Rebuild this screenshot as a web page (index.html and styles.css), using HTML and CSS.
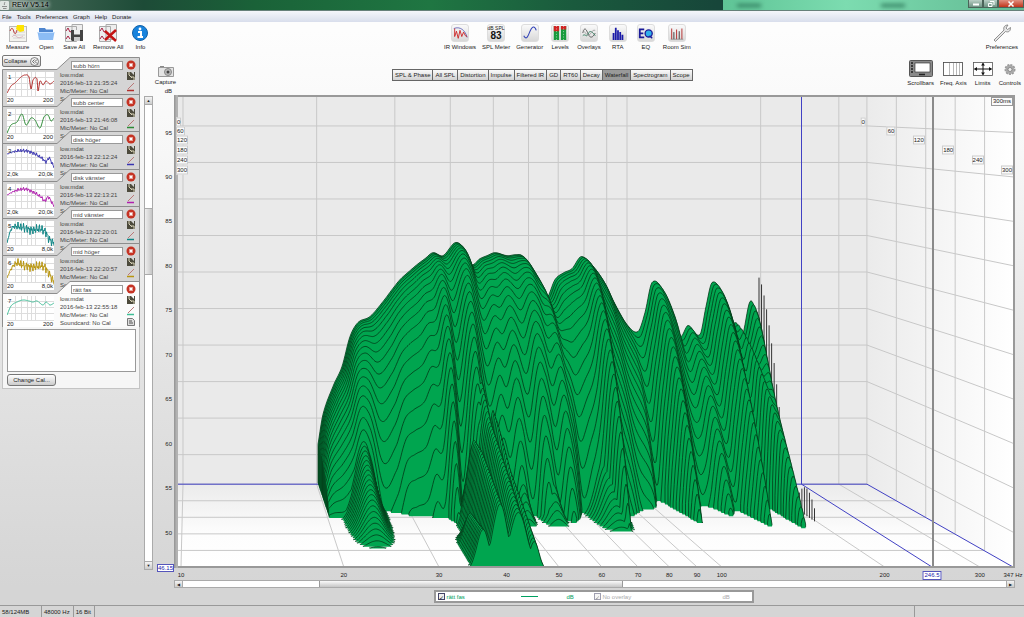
FILE: index.html
```html
<!DOCTYPE html>
<html lang="en">
  <head>
    <meta charset="UTF-8" />
    <meta name="viewport" content="width=device-width, initial-scale=1.0" />
    <title>REW V5.14</title>
    <link rel="stylesheet" href="styles.css">
  </head>
  <body>
    <header class="titlebar">
      <svg class="app-icon" width="9" height="9" viewBox="0 0 9 9"><rect width="9" height="9" rx="1" fill="#dfe5e2"/><path d="M4.500 1c1 1-1 1.500 0 3M2 5.500h5M3 7.500h3.500" stroke="#777" stroke-width=".8" fill="none"/></svg>
      <span>REW V5.14</span>
      <div class="glass"><i></i><i></i></div>
      <div class="window-buttons">
        <button aria-label="Minimize"><svg width="8" height="8"><path d="M1 4.500h6" stroke="#fff" stroke-width="2"/></svg></button>
        <button aria-label="Restore"><svg width="8" height="8"><path d="M3 1.500h4v3.500M1.500 3.500h3.500v3h-3.500z" stroke="#fff" fill="none"/></svg></button>
        <button class="close" aria-label="Close"><svg width="8" height="8"><path d="M1.500 1.500l5 5M6.500 1.500l-5 5" stroke="#fff" stroke-width="1.500"/></svg></button>
      </div>
    </header>

    <nav class="menubar">
      <button>File</button><button>Tools</button><button>Preferences</button><button>Graph</button><button>Help</button><button>Donate</button>
    </nav>

    <div class="toolbar">
      <div class="tools tools-left">
        <button class="tool">
          <svg width="18" height="18" viewBox="0 0 18 18"><rect x=".5" y="2.500" width="17" height="15" fill="#f3f3ee" stroke="#bbb"/><path d="M4 8h12M4 11h12M4 14h12" stroke="#d2d2d2"/><path d="M1 7c2-5 3-2 4 1s2 2 3-2" stroke="#b33" fill="none"/><path d="M3 13c2-3 4-1 5 0s4 1 6-1" stroke="#c9a" fill="none" stroke-width=".6"/><path d="M8 1h7v6l-4 1-4-3z" fill="#ffe400"/></svg>
          Measure
        </button>
        <button class="tool">
          <svg width="18" height="18" viewBox="0 0 18 18"><path d="M2 4h6l1 1.500h7V15H2z" fill="#4f86cf"/><path d="M.5 8h17L16 16H2z" fill="#8cbcf4"/><path d="M1 8.500h16" stroke="#bedcff"/></svg>
          Open
        </button>
        <button class="tool">
          <svg width="18" height="18" viewBox="0 0 18 18"><path d="M.5 2.500h11v15H.5zM7 .5h10.500v15H7z" fill="#eee" stroke="#aaa"/><path d="M1 7l2-3 2 4 2-1M1 15l2-3 2 3" stroke="#a24" fill="none"/><path d="M6 6h12v11H7l-1-1z" fill="#444"/><path d="M9 6h6v4.500H9z" fill="#eee"/><path d="M9 13h6v4H9z" fill="#ccc"/></svg>
          Save All
        </button>
        <button class="tool">
          <svg width="18" height="18" viewBox="0 0 18 18"><path d="M.5 2.500h11v15H.5zM7 .5h10.500v15H7z" fill="#eee" stroke="#aaa"/><path d="M1 7l2-3 2 4 2-1M1 15l2-3 2 3" stroke="#a24" fill="none"/><path d="M6 7l11 10M17 6L6 16" stroke="#c31414" stroke-width="2.500"/></svg>
          Remove All
        </button>
        <button class="tool">
          <svg width="18" height="18" viewBox="0 0 18 18"><circle cx="9" cy="9" r="7.500" fill="#1883dd" stroke="#1161a8"/><circle cx="9" cy="5" r="1.400" fill="#fff"/><path d="M7 8h3v5M6.500 13h5.500" stroke="#fff" stroke-width="2" fill="none"/></svg>
          Info
        </button>
      </div>
      <div class="tools tools-mid">
        <button class="tool">
          <svg class="tile" width="18" height="18" viewBox="0 0 18 18"><path d="M2 4c7-3 13 2 15 10" stroke="#44a" fill="none" stroke-width=".8"/><path d="M3 4v9l2-6 2 8 2-9 2 7 2-5 2 4 2 1" stroke="#c22" fill="none"/></svg>
          IR Windows
        </button>
        <button class="tool">
          <span class="tile spl"><small>dB SPL</small><b>83</b></span>
          SPL Meter
        </button>
        <button class="tool">
          <svg class="tile" width="18" height="18" viewBox="0 0 18 18"><path d="M2 12c3 6 5 0 7-5s5-7 7-1" stroke="#3344b8" fill="none" stroke-width="1.200"/></svg>
          Generator
        </button>
        <button class="tool">
          <svg class="tile" width="18" height="18" viewBox="0 0 18 18"><path d="M2 1h6v16H2zM10 1h6v16h-6z" fill="#179a3c"/><path d="M2 1h6v6H2zM10 1h6v4h-6z" fill="#d02323"/><path d="M5 1v16M13 1v16" stroke="#fff" stroke-dasharray="1 2" stroke-width=".7"/></svg>
          Levels
        </button>
        <button class="tool">
          <svg class="tile" width="18" height="18" viewBox="0 0 18 18"><path d="M2 9c2-8 4-4 6 1s5 5 8-1" stroke="#555" fill="none"/><path d="M2 12c3-3 4 3 6-2s5-2 8 2" stroke="#2a7a5a" fill="none"/><path d="M2 6c4 3 4 6 7 5s3-6 7-5" stroke="#999" fill="none"/></svg>
          Overlays
        </button>
        <button class="tool">
          <svg class="tile" width="18" height="18" viewBox="0 0 18 18"><path d="M3 9h2v8H3zM5.500 3h2v14h-2zM8 6h2v11H8zM10.500 8h2v9h-2zM13 11h2v6h-2z" fill="#1a1aa8"/></svg>
          RTA
        </button>
        <button class="tool">
          <svg class="tile" width="18" height="18" viewBox="0 0 18 18"><path d="M7 5H2v9h5M2 9.500h4" stroke="#1a1a98" stroke-width="2" fill="none"/><circle cx="12" cy="9.500" r="4" fill="#2fb0ea" stroke="#1a1a98" stroke-width="1.500"/><path d="M13 12l3 3" stroke="#1a1a98" stroke-width="1.500"/></svg>
          EQ
        </button>
        <button class="tool">
          <svg class="tile" width="18" height="18" viewBox="0 0 18 18"><path d="M3 4v12M8.500 5v11M14.500 4v12" stroke="#b44" stroke-width="1.200"/><path d="M5.500 8v8M11.500 7v9" stroke="#333"/><path d="M2 16h14" stroke="#777" stroke-width=".7"/></svg>
          Room Sim
        </button>
      </div>
      <div class="tools tools-right">
        <button class="tool">
          <svg width="18" height="18" viewBox="0 0 18 18"><path d="M1 16L11 6c-1-3 1-5 4-5l-2 3 1.500 1.500 3-2c0 4-2 5-5 4L2.500 17.500z" fill="#e6e6e6" stroke="#777" stroke-width=".8"/></svg>
          Preferences
        </button>
      </div>
    </div>

    <main class="workspace">
      <aside class="sidebar">
        <div class="measurements">
          <button class="collapse">Collapse <svg width="9" height="9" viewBox="0 0 9 9"><circle cx="4.500" cy="4.500" r="4" fill="#eee" stroke="#555" stroke-width=".7"/><path d="M4.500 2.500l-2 2 2 2M7 2.500l-2 2 2 2" fill="none" stroke="#333" stroke-width=".7"/></svg></button>
          <div class="cards" id="cards"></div>
          <div class="details">
            <textarea aria-label="Notes"></textarea>
            <button class="change-cal">Change Cal...</button>
          </div>
        </div>
        <div class="vscroll">
          <button aria-label="Scroll up">▲</button>
          <div class="track"><div class="thumb"></div></div>
          <button aria-label="Scroll down">▼</button>
        </div>
      </aside>

      <section class="graph">
        <div class="graph-head">
          <button class="tool capture">
            <svg width="16" height="12" viewBox="0 0 16 12"><path d="M.5 2.500h15v9H.5z" fill="#e4e4e4" stroke="#999"/><path d="M2 1.500h4" stroke="#888"/><circle cx="10" cy="7" r="3.500" fill="#bbb" stroke="#888"/><circle cx="10" cy="7" r="1.500" fill="#444"/></svg>
            Capture
          </button>
          <div class="tabs">
            <button>SPL &amp; Phase</button><button>All SPL</button><button>Distortion</button><button>Impulse</button><button>Filtered IR</button><button>GD</button><button>RT60</button><button>Decay</button><button class="active">Waterfall</button><button>Spectrogram</button><button>Scope</button>
          </div>
          <div class="tools view-tools">
            <button class="tool">
              <svg width="24" height="18" viewBox="0 0 24 18"><rect x=".5" y=".5" width="23" height="16" rx="1" fill="#8a8a8a" stroke="#555"/><rect x="6" y="3" width="15" height="9" fill="#fff" stroke="#222" stroke-width=".6"/><path d="M2 3h2M2 6h2M2 9h2M2 12h2M10 14.500h6" stroke="#222" stroke-width="1.500"/></svg>
              Scrollbars
            </button>
            <button class="tool">
              <svg width="20" height="18" viewBox="0 0 20 18"><rect x=".5" y="2.500" width="19" height="13" fill="#fff" stroke="#444" stroke-width=".8"/><path d="M6.500 3v12M10.500 3v12M13.500 3v12M16.500 3v12" stroke="#999" stroke-width=".7"/></svg>
              Freq. Axis
            </button>
            <button class="tool">
              <svg width="20" height="18" viewBox="0 0 20 18"><rect x=".5" y="2.500" width="19" height="13" fill="#fff" stroke="#555" stroke-width=".8"/><path d="M1.500 9h17M10 3v12" stroke="#111"/><path d="M4 7L1 9l3 2zM16 7l3 2-3 2zM8 5.500L10 3l2 2.500zM8 12.500l2 2.500 2-2.500z" fill="#111"/></svg>
              Limits
            </button>
            <button class="tool">
              <svg width="12" height="18" viewBox="0 0 12 18"><circle cx="6" cy="9.500" r="4.500" fill="#b5b5b5" stroke="#999" stroke-width="2" stroke-dasharray="2 1"/><circle cx="6" cy="9.500" r="4" fill="#aaa"/><circle cx="6" cy="9.500" r="2" fill="#eee" stroke="#666" stroke-width=".6"/></svg>
              Controls
            </button>
          </div>
        </div>

        <div class="plot-grid">
          <div class="y-axis" id="y-axis"><span class="unit">dB</span></div>
          <div class="plot" id="plot">
            <svg viewBox="174 95 841 474" preserveAspectRatio="none" id="waterfall" role="img" aria-label="Waterfall">
              <defs>
                <linearGradient id="side" x1="0" x2="1" y1="0" y2="0"><stop offset="0" stop-color="#ebebeb"/><stop offset="1" stop-color="#fff"/></linearGradient>
                <linearGradient id="floor" x1="0" x2="0" y1="0" y2="1"><stop offset="0" stop-color="#ebebeb"/><stop offset=".6" stop-color="#fdfdfd"/><stop offset="1" stop-color="#fff"/></linearGradient>
              </defs>
              <rect x="174" y="95" width="841" height="474" fill="#eaeaea"/>
              <path d="M178 485H867L1014 568H178z" fill="url(#floor)"/>
              <path d="M867 96H1014V568L867 485z" fill="url(#side)"/>
              <g id="grid"></g>
              <path d="M178 485H867L1013 568M801.500 96V485L932 568" class="cursor-lines"/>
              <g id="slices"></g>
              <path d="M933 96V568" class="cursor"/>
              <path d="M174 96h841M1014 96v473M174 568h841" class="frame"/>
              <path d="M174 95h4v474h-4z" fill="#b2b2b2"/>
              <path d="M174.500 95v474" class="frame"/>
            </svg>
            <span class="range">300ms</span>
          </div>
          <div class="y-cursor">46.15</div>
          <div class="x-axis" id="x-axis"></div>
          <div class="hscroll">
            <button aria-label="Scroll left">◀</button>
            <div class="track"><div class="thumb"></div></div>
            <button aria-label="Scroll right">▶</button>
          </div>
        </div>

        <div class="legend">
          <label class="trace"><input type="checkbox" checked />rätt fas</label>
          <i class="line"></i>
          <span class="trace">dB</span>
          <label class="overlay"><input type="checkbox" checked disabled />No overlay</label>
          <span class="overlay">dB</span>
        </div>
      </section>
    </main>

    <footer class="statusbar">
      <span>58/124MB</span><span>48000 Hz</span><span>16 Bit</span><span class="fill"></span><span class="last"></span>
    </footer>

    <script src="script.js"></script>
  </body>
</html>
```

FILE: styles.css
```css
* {
  box-sizing: border-box;
}
body {
  margin: 0;
  height: 100vh;
  display: flex;
  flex-direction: column;
  overflow: hidden;
  font-family: "Liberation Sans", Arial, sans-serif;
  font-size: 6px;
  line-height: 8px;
  color: #222;
  background: linear-gradient(#fdfdfd 5%, #f7f7f7 25%, #e3e3e3 60%, #d5d5d5 95%);
}
button,
input,
textarea {
  font: inherit;
  color: inherit;
  margin: 0;
  padding: 0;
}
button {
  border: none;
  background: none;
}
svg {
  display: block;
}

/* title and menu */
.titlebar {
  height: 11px;
  display: flex;
  align-items: center;
  gap: 3px;
  flex: none;
  background: linear-gradient(90deg, #8fa097 0, #3c6250 5%, #1d4b37 14%, #1a6238 25%, #1f7642 42%, #1a5a3d 56%, #17463a 70%);
  border-bottom: 1px solid #66807a;
}
.titlebar span {
  font-size: 7px;
  color: #000;
  text-shadow: 0 0 4px #fff, 0 0 4px #fff;
}
.glass {
  margin-left: auto;
  width: 30%;
  height: 10px;
  margin-right: -65px;
  display: flex;
  gap: 120px;
  align-items: center;
  padding-left: 14px;
  background: linear-gradient(90deg, #5fc496, #7cdcb0 40%, #62b892);
}
.glass i {
  width: 24px;
  height: 3px;
  background: #2f7a5c;
  filter: blur(2px);
}
.window-buttons {
  display: flex;
  align-self: flex-start;
  isolation: isolate;
}
.window-buttons button {
  width: 15px;
  height: 8px;
  display: flex;
  justify-content: center;
  background: linear-gradient(#b9cfc5, #6f9484);
  border: 1px solid #4b6459;
  border-top: none;
}
.window-buttons .close {
  width: 26px;
  background: linear-gradient(#e09080, #c0341b);
}
.menubar {
  height: 11px;
  flex: none;
  display: flex;
  gap: 5px;
  padding-left: 2px;
  background: linear-gradient(#f4f6fb, #d9deec);
}

/* toolbar */
.toolbar {
  height: 33px;
  flex: none;
  display: grid;
  grid-template-columns: 444px 1fr auto;
  padding: 2px 6px 0 0;
}
.tools {
  display: flex;
}
.tools-left {
  gap: 8px;
  padding-left: 6px;
}
.tools-mid {
  gap: 6px;
}
.tool {
  display: flex;
  flex-direction: column;
  align-items: center;
  gap: 1px;
  white-space: nowrap;
}
.tools-mid .tool {
  min-width: 22px;
}
.tile {
  width: 18px;
  height: 18px;
  border: 1px solid #ddd;
  border-radius: 3px;
  background: linear-gradient(#fafafa, #d8d8d8);
}
.spl {
  display: flex;
  flex-direction: column;
  align-items: center;
}
.spl small {
  font-size: 5px;
  line-height: 6px;
}
.spl b {
  font-size: 10px;
  line-height: 9px;
  color: #111;
}

.workspace {
  flex: 1;
  display: flex;
  min-height: 0;
}

/* measurement list */
.sidebar {
  width: 154px;
  flex: none;
  display: flex;
  gap: 4px;
  padding-left: 2px;
}
.measurements {
  width: 138px;
}
.collapse {
  width: 39px;
  height: 12px;
  display: flex;
  align-items: center;
  justify-content: center;
  gap: 3px;
  margin-bottom: -10px;
  border: 1px solid #777;
  border-radius: 2px;
  background: linear-gradient(#fff, #ccc);
}
.card {
  height: 37px;
  display: grid;
  grid-template-columns: 58px 1fr 14px;
  isolation: isolate;
  position: relative;
  color: #444;
}
.card:nth-child(3n) {
  height: 38px;
}
.card:last-child {
  height: 46px;
  overflow: hidden;
}
.card-shape {
  position: absolute;
  z-index: -1;
  top: 0;
  left: 0;
}
.card-shape path {
  fill: #d5d5d5;
  stroke: #8d8d8d;
}
.card.selected .card-shape path {
  fill: #fbfbfb;
}
.card .preview {
  margin: 15px 0 0 5px;
}
.preview text {
  font-size: 6px;
  fill: #222;
}
.card input {
  width: 52px;
  height: 9px;
  margin: 4px 0 1px 11px;
  padding: 0 1px;
  border: 1px solid #999;
  background: #fff;
  display: block;
}
.card p {
  margin: 0;
  white-space: nowrap;
}
.card-icons {
  display: flex;
  flex-direction: column;
  gap: 1px;
  padding-top: 3px;
}
.card-icons button {
  width: 10px;
  height: 10px;
}
.details {
  padding: 2px 3px 2px 4px;
  background: #f6f6f6;
  border: 1px solid #c4c4c4;
  border-top: none;
}
.details textarea {
  display: block;
  width: 100%;
  height: 43px;
  border: 1px solid #999;
  background: #fff;
  resize: none;
}
.change-cal {
  display: block;
  width: 49px;
  height: 12px;
  margin-top: 2px;
  border: 1px solid #777;
  border-radius: 3px;
  background: linear-gradient(#fff, #ccc);
}

/* scrollbars */
.vscroll {
  width: 9px;
  margin: 41px 0 35px;
  display: flex;
  flex-direction: column;
}
.vscroll button,
.hscroll button {
  flex: none;
  width: 9px;
  height: 9px;
  font-size: 4px;
  line-height: 7px;
  text-align: center;
  border: 1px solid #aaa;
  background: linear-gradient(#f4f4f4, #ccc);
}
.track {
  flex: 1;
  display: flex;
  background: #fff;
  border: 1px solid #aaa;
}
.vscroll .track {
  flex-direction: column;
  border-width: 0 1px;
}
.vscroll .thumb {
  margin-top: 103px;
  height: 67px;
  background: linear-gradient(90deg, #eee, #c6c6c6);
  border: 1px solid #aaa;
  border-width: 1px 0;
}
.hscroll .track {
  border-width: 1px 0;
}
.hscroll .thumb {
  margin-left: 16.5%;
  width: 37%;
  background: linear-gradient(#fafafa, #c6c6c6);
  border: 1px solid #999;
  border-width: 0 1px;
}

/* graph */
.graph {
  flex: 1;
  min-width: 0;
  display: flex;
  flex-direction: column;
}
.graph-head {
  height: 40px;
  flex: none;
  display: grid;
  grid-template-columns: 238px 1fr auto;
  align-items: start;
  padding-right: 3px;
}
.capture {
  width: 23px;
  padding-top: 10px;
}
.tabs {
  display: flex;
  margin-top: 14px;
}
.tabs button {
  height: 12px;
  padding: 0 2px;
  border: 1px solid #666;
  border-left: none;
  white-space: nowrap;
  background: linear-gradient(#fafafa, #d2d2d2);
}
.tabs button:first-child {
  border-left: 1px solid #666;
}
.tabs .active {
  background: #999;
}
.view-tools {
  gap: 6px;
  padding-top: 5px;
}
.plot-grid {
  flex: 1;
  min-height: 0;
  display: grid;
  grid-template-columns: 20px 1fr 9px;
  grid-template-rows: 1fr 12px 8px;
}
.y-axis,
.plot,
.x-axis {
  position: relative;
}
.plot > svg {
  position: absolute;
  width: 100%;
  height: 100%;
}
.y-axis span,
.x-axis span,
.plot span {
  position: absolute;
}
.y-axis span {
  right: 2px;
  transform: translateY(-50%);
}
.y-axis .unit {
  top: -4px;
}
.x-axis span {
  top: 3px;
  transform: translateX(-50%);
  white-space: nowrap;
}
.x-axis .marker,
.y-cursor {
  color: #22a;
  background: #fff;
  border: 1px solid #55b;
}
.x-axis .marker {
  line-height: 7px;
  padding: 0 1px;
}
.plot .time,
.plot .range {
  background: #fafafa;
  border: 1px solid #ccc;
  line-height: 7px;
}
.plot .time {
  transform: translateY(-50%);
}
.plot .time.right {
  transform: translate(-100%, -50%);
}
.plot .range {
  top: 2px;
  right: 2px;
  padding: 0 1px;
  border-color: #999;
}
.y-cursor {
  grid-row: 2;
  grid-column: 1;
  justify-self: end;
  align-self: start;
  margin-top: -4px;
  height: 8px;
  line-height: 7px;
}
.x-axis {
  grid-row: 2;
  grid-column: 2;
}
.hscroll {
  grid-row: 3;
  grid-column: 2;
  display: flex;
}
.hscroll button {
  height: 8px;
}
.grid-line {
  fill: none;
  stroke: #c8c8c8;
}
.cursor-lines {
  fill: none;
  stroke: #4040c4;
}
.cursor {
  stroke: #8a8a8a;
  stroke-width: 2;
}
.frame {
  fill: none;
  stroke: #999;
  stroke-width: 2;
}
.slice-fill {
  fill: #00a54f;
}
.slice-line {
  fill: none;
  stroke: #043818;
  stroke-width: 0.8;
}
.spike {
  stroke: #333;
}
.legend {
  align-self: center;
  width: 320px;
  height: 13px;
  margin: 2px 0 2px 9px;
  flex: none;
  display: grid;
  grid-template-columns: 83px 46px 27px 129px 1fr;
  align-items: center;
  padding-left: 2px;
  background: #fff;
  border: 2px solid #999;
}
.legend label {
  display: flex;
  align-items: center;
  gap: 2px;
}
.legend input {
  appearance: none;
  width: 7px;
  height: 7px;
  border: 1px solid #446;
  background: #eee;
  display: grid;
  place-items: center;
  font-size: 6px;
}
.legend input::before {
  content: "✓";
  color: #222;
}
.legend input:disabled {
  opacity: 0.5;
}
.legend .line {
  width: 17px;
  height: 1px;
  background: #00a060;
}
.trace {
  color: #00a060;
}
.overlay {
  color: #aaa;
}

.statusbar {
  height: 12px;
  flex: none;
  display: flex;
  border-top: 1px solid #999;
  background: #d5d5d5;
}
.statusbar span {
  padding: 2px 3px 0 2px;
  border-right: 1px solid #999;
}
.statusbar span:first-child {
  width: 42px;
}
.statusbar .fill {
  flex: 1;
}
.statusbar .last {
  width: 109px;
  border: none;
}
```

FILE: script.js
```js
// measurement cards
const measurements = [
  { name: "subb hörn", time: "21:35:24", color: "#b3302e", lo: "20", hi: "200", noise: 0,
    pts: [[0, 21], [4, 14], [8, 11], [14, 5], [18, 3], [22, 5], [24, 17], [26, 8], [30, 7], [31, 19], [33, 9], [36, 13], [39, 9], [43, 12], [47, 9]] },
  { name: "subb center", time: "21:46:08", color: "#2c8a35", lo: "20", hi: "200", noise: 0,
    pts: [[0, 24], [4, 16], [10, 13], [15, 5], [19, 16], [24, 9], [28, 11], [33, 19], [37, 8], [41, 6], [44, 12], [47, 9]] },
  { name: "disk höger", time: "22:12:24", color: "#3934b0", lo: "2,0k", hi: "20,0k", noise: 2,
    pts: [[0, 8], [10, 5], [20, 5], [28, 8], [36, 13], [39, 16], [42, 12], [45, 17], [47, 21]] },
  { name: "disk vänster", time: "22:13:21", color: "#b01fae", lo: "2,0k", hi: "20,0k", noise: 2,
    pts: [[0, 11], [8, 7], [18, 5], [26, 8], [34, 13], [38, 17], [41, 13], [47, 22]] },
  { name: "mid vänster", time: "22:20:01", color: "#0f8585", lo: "20", hi: "8,0k", noise: 5,
    pts: [[0, 22], [3, 11], [6, 6], [14, 6], [24, 9], [34, 8], [39, 12], [42, 18], [47, 22]] },
  { name: "mid höger", time: "22:20:57", color: "#b8950f", lo: "20", hi: "8,0k", noise: 5,
    pts: [[0, 20], [4, 11], [10, 5], [18, 8], [26, 9], [36, 8], [41, 14], [47, 24]] },
  { name: "rätt fas", time: "22:55:18", color: "#3fbd96", lo: "20", hi: "200", noise: 0,
    pts: [[0, 19], [4, 10], [10, 6], [16, 4], [22, 5], [26, 6], [30, 5], [36, 9], [39, 6], [43, 9], [47, 7]] },
];

function smooth(pts, x, k = 1) {
  let i = 0;
  while (i < pts.length - 2 && x > pts[i + 1][0]) i++;
  const a = pts[i], b = pts[i + 1];
  const p = pts[i - 1] || a, n = pts[i + 2] || b;
  const w = b[0] - a[0];
  const f = Math.min(1, Math.max(0, (x - a[0]) / w));
  const m0 = ((b[k] - p[k]) / (b[0] - p[0])) * w;
  const m1 = ((n[k] - a[k]) / (n[0] - a[0])) * w;
  const f2 = f * f, f3 = f2 * f;
  return (2 * f3 - 3 * f2 + 1) * a[k] + (f3 - 2 * f2 + f) * m0 + (3 * f2 - 2 * f3) * b[k] + (f3 - f2) * m1;
}

function previewPath(m) {
  let d = "";
  for (let x = 0; x <= 47; x += 0.5) {
    const jitter = m.noise * Math.sin(x * 7.3) * Math.sin(x * 2.9 + 1) * Math.min(1, x / 12);
    d += (d ? "L" : "M") + x + " " + (smooth(m.pts, x) + jitter).toFixed(1);
  }
  return d;
}

document.getElementById("cards").innerHTML = measurements.map((m, i) => `
  <div class="card ${i === 6 ? "selected" : ""}">
    <svg class="card-shape" width="138" height="53"><path d="M.5 54V12.500H55L68 .5H137.500V54"/></svg>
    <svg class="preview" width="47" height="32" viewBox="0 0 47 32">
      <rect width="47" height="32" fill="#fff"/>
      <path d="M8.500 0v25M14.500 0v25M20.500 0v25M24.500 0v25M28.500 0v25M38.500 0v25M0 5.500h47M0 11.500h47M0 17.500h47M0 24.500h47" stroke="#ddd"/>
      <path d="${previewPath(m)}" fill="none" stroke="${m.color}"/>
      <text x="1" y="7">${i + 1}</text>
      <text x="0" y="30">${m.lo}</text>
      <text x="46" y="30" text-anchor="end">${m.hi}</text>
    </svg>
    <div>
      <input type="text" value="${m.name}" aria-label="Measurement ${i + 1} name" />
      <p>low.mdat</p>
      <p>2016-feb-13 ${m.time}</p>
      <p>Mic/Meter: No Cal</p>
      <p>Soundcard: No Cal</p>
    </div>
    <div class="card-icons">
      <button aria-label="Remove"><svg width="10" height="10"><circle cx="5" cy="5" r="4.500" fill="#c53324"/><path d="M3.500 3.500l3 3M6.500 3.500l-3 3" stroke="#fff" stroke-width="1.500"/></svg></button>
      <button aria-label="Save"><svg width="10" height="10"><path d="M1 1h4l3 3V1h1v8H1z" fill="#4c4a3c"/><path d="M3 1v3l3 3M5 6h3v3" stroke="#d9d3b8" fill="none"/></svg></button>
      <button aria-label="Trace colour"><svg width="10" height="10"><path d="M2 7l6-6" stroke="#b77" /><path d="M1 8.500h7" stroke="${m.color}" stroke-width="1.500"/></svg></button>
      ${i === 6 ? `<button aria-label="Notes"><svg width="10" height="10"><path d="M1.500 1.500h5l2 2v5h-7z" fill="#ddd" stroke="#777"/><path d="M3 4h3M3 6h4" stroke="#555"/></svg></button>` : ""}
    </div>
  </div>`).join("");

// waterfall projection: t = 0 is the back wall, t = 1 the front edge
const DEPTH = 0.821;
const freqX = (f) => 181 + (Math.log(f / 10) / Math.log(34.7)) * 833;
const scale = (t) => DEPTH + (1 - DEPTH) * t;
const projX = (xf, t) => 183 - 2 * t + (xf - 181) * scale(t);
const floorY = (t) => 485 + 83 * t;

const pctX = (x) => ((x - 174) / 841) * 100 + "%";
const pctY = (y) => ((y - 95) / 474) * 100 + "%";

function addLabel(parent, text, cls, style) {
  const el = document.createElement("span");
  el.textContent = text;
  el.className = cls;
  Object.assign(el.style, style);
  document.getElementById(parent).append(el);
}

// grid
let grid = "";
const freqs = [10, 20, 30, 40, 50, 60, 70, 80, 90, 100, 200, 300];
for (const f of freqs) {
  const xf = freqX(f);
  grid += `M${projX(xf, 0)} 96V485L${projX(xf, 1)} 568`;
  addLabel("x-axis", f, "", { left: pctX(xf) });
}
for (let i = 0; i < 10; i++) {
  const back = 126 + 36.6 * i;
  const front = 132.6 + 44.55 * i;
  grid += `M178 ${back}H867L1014 ${front}`;
  addLabel("y-axis", 95 - 5 * i, "", { top: pctY(front) });
}
[0, 60, 120, 180, 240, 300].forEach((ms, i) => {
  const t = i / 5;
  const x = projX(1014, t);
  const y = 122 + 9 * i + (i * i) / 7;
  grid += `M${x} 96V${floorY(t)}H178`;
  addLabel("plot", ms, "time", { left: pctX(176), top: pctY(y) });
  addLabel("plot", ms, "time right", { left: pctX(x - 1), top: pctY(y) });
});
document.getElementById("grid").innerHTML = `<path class="grid-line" d="${grid}"/>`;
addLabel("x-axis", "246.5", "marker", { left: pctX(932) });
addLabel("x-axis", "347 Hz", "", { left: pctX(1013) });

// first slice: x on the back wall, y of the curve, decay time
const profile = [
  [318, 445, 0.42], [323, 415, 0.42], [333, 387, 0.42], [342, 367, 0.44], [350, 337, 0.47], [358, 323, 0.43],
  [370, 317, 0.35], [383, 302, 0.36], [392, 290, 0.39], [400, 280, 0.395], [410, 271, 0.4], [417, 265, 0.42], [425, 259, 0.42], [433, 253, 0.5], [443, 256, 0.39],
  [455, 243, 0.52], [463, 248, 0.44], [471, 265, 0.39], [480, 259, 0.43], [487, 256, 0.41], [495, 253, 0.45], [507, 256, 0.4],
  [516, 255, 0.48], [522, 256, 0.46], [530, 267, 0.42], [538, 282, 0.48], [546, 299, 0.44], [555, 280, 0.36], [564, 273, 0.38],
  [572, 269, 0.43], [581, 257, 0.58], [590, 264, 0.44], [602, 280, 0.38], [612, 300, 0.33], [627, 325, 0.3],
  [638, 332, 0.22], [645, 313, 0.36], [652, 283, 0.49], [663, 290, 0.35], [673, 313, 0.28], [680, 337, 0.3],
  [688, 326, 0.4], [700, 335, 0.34], [706, 307, 0.44], [712, 283, 0.53], [722, 293, 0.38], [732, 322, 0.3], [737, 324, 0.52],
  [742, 337, 0.54], [750, 302, 0.34], [757, 313, 0.2],
];

// resonances that ring longer than the rest
const ridges = [
  { u: 351, w: 9, env: [[0, 90], [0.25, 88], [0.4, 66], [0.6, 36], [0.8, 0]] },
  { u: 431, w: 5, env: [[0, 0], [0.6, 0], [0.75, 32], [1, 34]] },
  { u: 445, w: 6, env: [[0, 0], [0.36, 0], [0.52, 82], [0.65, 80], [1, 55]] },
  { u: 460, w: 7, env: [[0, 170], [0.25, 150], [0.5, 98], [1, 48]] },
  { u: 473, w: 4, env: [[0, 130], [0.4, 90], [0.6, 60], [1, 24]] },
  { u: 495, w: 5, env: [[0, 90], [0.35, 60], [0.54, 0]] },
  { u: 522, w: 6, env: [[0, 90], [0.35, 60], [0.54, 0]] },
  { u: 574, w: 8, env: [[0, 70], [0.35, 60], [0.6, 0]] },
];

function linear(pts, x) {
  let i = 0;
  while (i < pts.length - 2 && x > pts[i + 1][0]) i++;
  const [a, b] = [pts[i], pts[i + 1]];
  return a[1] + (b[1] - a[1]) * Math.min(1, (x - a[0]) / (b[0] - a[0]));
}

function level(u, t) {
  const top = 485 - smooth(profile, u);
  // higher frequencies start falling earlier
  const knee = u < 560 ? 2.4 : Math.max(1.5, 2.4 - (u - 560) / 80);
  let h = top * (1 - Math.pow(t / smooth(profile, u, 2), knee));
  for (const r of ridges) {
    const d = (u - r.u) / r.w;
    h = Math.max(h, Math.min(top, linear(r.env, t) * Math.exp(-d * d / 2) - 3));
  }
  return h;
}

const SLICES = 49;
let out = "";
for (let s = 0; s <= SLICES; s++) {
  const t = s / SLICES;
  const base = floorY(t);
  let run = [];
  const flush = () => {
    if (run.length > 1) {
      const line = run.map((p) => p.join(" ")).join("L");
      const x0 = run[0][0], x1 = run[run.length - 1][0];
      out += `<path class="slice-fill" d="M${x0} ${base}L${line}L${x1} ${base}z"/>`;
      out += `<path class="slice-line" d="M${x0} ${base - 1}L${line}L${x1} ${base - 1}"/>`;
    }
    run = [];
  };
  for (let u = 318; u <= 757; u++) {
    const h = level(u, t);
    if (h <= 0) {
      flush();
      continue;
    }
    const x = projX(181 + (u - 183) / DEPTH, t);
    run.push([x.toFixed(1), (base - (h * scale(t)) / DEPTH).toFixed(1)]);
  }
  flush();
  // narrow peak at the end of the sweep
  const spike = t < 0.24 ? 207 * (1 - Math.pow(t / 0.24, 1.5)) : t > 0.3 && t < 0.46 ? 28 * Math.sin(((t - 0.28) / 0.2) * Math.PI) : 0;
  if (spike > 0) {
    const x = projX(882.6, t);
    out += `<path class="spike" d="M${x} ${base}V${base - spike}"/>`;
  }
}
document.getElementById("slices").innerHTML = out;
```
